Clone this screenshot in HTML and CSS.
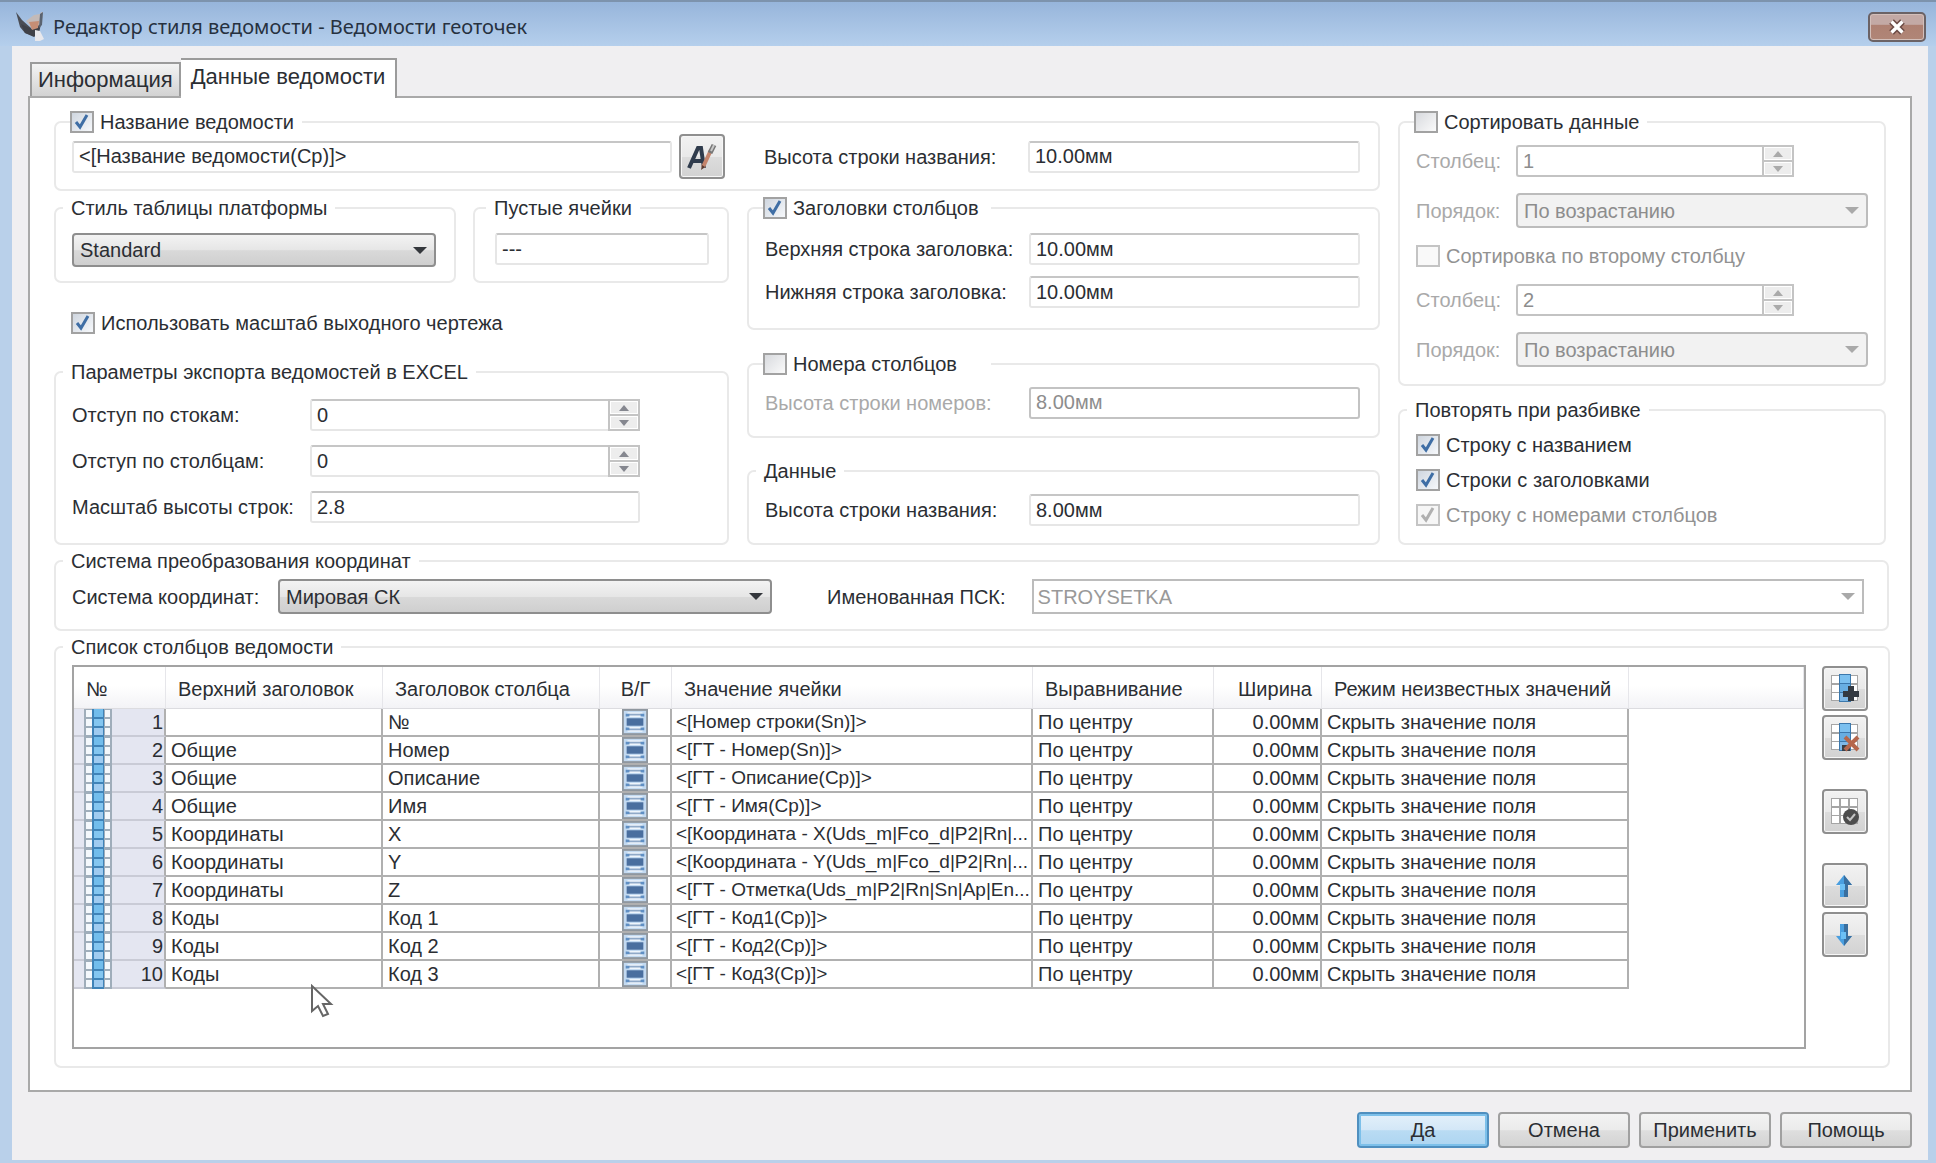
FILE: index.html
```html
<!DOCTYPE html>
<html lang="ru">
<head>
    <meta charset="UTF-8">
    <meta name="viewport" content="width=device-width, initial-scale=1.0">
    <title>Редактор стиля ведомости - Ведомости геоточек</title>
    <link rel="stylesheet" href="styles.css">
</head>
<body>

<svg class="sprite" aria-hidden="true">
    <symbol id="icon-column" viewBox="0 0 28 28">
        <rect width="28" height="28" fill="#9fadba"/>
        <g fill="#f4f8fc">
            <rect x="2" y="1" width="6" height="7"/><rect x="2" y="10" width="6" height="7"/><rect x="2" y="19" width="6" height="7"/>
            <rect x="21" y="1" width="5" height="7"/><rect x="21" y="10" width="5" height="7"/><rect x="21" y="19" width="5" height="7"/>
        </g>
        <rect x="8" width="12" height="28" fill="#3f83b8"/>
        <rect x="10" y="0" width="9" height="8" fill="#72bdec"/>
        <rect x="10" y="10" width="9" height="7" fill="#84c6f0"/>
        <rect x="10" y="19" width="9" height="7" fill="#9fcbf0"/>
    </symbol>
    <symbol id="icon-merge" viewBox="0 0 28 28">
        <rect x="1" y="1" width="26" height="26" fill="#c3daf1" stroke="#8f979f" stroke-width="2"/>
        <path d="M6 6h16M6 22h16" stroke="#eef5fc" stroke-width="5"/>
        <path d="M7 6h14M7 22h14" stroke="#8fa9c8" stroke-width="2"/>
        <path d="M4 5h4v3H4zM20 5h4v3h-4zM4 20h4v3H4zM20 20h4v3h-4z" fill="#5f8fc4"/>
        <rect x="5" y="10" width="18" height="8" fill="#4a6f9f"/>
    </symbol>
    <symbol id="icon-grid" viewBox="0 0 30 30">
        <rect x="1" y="1" width="27" height="26" fill="#a5a5a5"/>
        <g fill="#fff">
            <rect x="2" y="2" width="7" height="7"/><rect x="2" y="11" width="7" height="7"/><rect x="2" y="19" width="7" height="7"/>
            <rect x="11" y="2" width="7" height="7"/><rect x="11" y="11" width="7" height="7"/><rect x="11" y="19" width="7" height="7"/>
            <rect x="20" y="2" width="7" height="7"/><rect x="20" y="11" width="7" height="7"/><rect x="20" y="19" width="7" height="7"/>
        </g>
    </symbol>
    <symbol id="icon-grid-col" viewBox="0 0 30 30">
        <use href="#icon-grid"/>
        <rect x="9" y="0" width="12" height="28" fill="#3c78ac"/>
        <rect x="10" y="1" width="10" height="8" fill="#7cc0ef"/>
        <rect x="10" y="10" width="10" height="8" fill="#68aee2"/>
        <rect x="10" y="19" width="10" height="8" fill="#7fb8e6"/>
    </symbol>
</svg>

<header class="titlebar">
    <svg class="app-icon" viewBox="0 0 30 30">
        <path d="M0 0l6 8 9 8 3 8-9-3-5-6z" fill="#4a4d55"/>
        <path d="M10 9l8-6 6-1 2-3 1 3-3 11-9 2z" fill="#c3bab8"/>
        <path d="M5 12l11 5 9-5-2 9-5 4-9-4z" fill="#3f4148"/>
        <path d="M13 10l10-1-1 7-6 2z" fill="#c68e75"/>
        <path d="M24 2l3-2-1 13-3 3z" fill="#5a6370"/>
        <path d="M19 18l5 1 4 8-4 2h-5z" fill="#e8e8ec"/>
    </svg>
    <h1>Редактор стиля ведомости - Ведомости геоточек</h1>
    <button type="button" class="close" aria-label="Закрыть">
        <svg viewBox="0 0 20 16"><path d="M5 3l10 10M15 3L5 13" stroke="#6d4c46" stroke-width="6"/><path d="M5 3l10 10M15 3L5 13" stroke="#fff" stroke-width="3"/></svg>
    </button>
</header>

<main class="client">
    <nav class="tabs">
        <button type="button" class="tab">Информация</button>
        <button type="button" class="tab active">Данные ведомости</button>
    </nav>

    <div class="panel">
        <div class="top">
            <div class="main-col">
                <fieldset>
                    <legend class="tick"><label><input type="checkbox" checked>Название ведомости</label></legend>
                    <div class="name-row">
                        <input type="text" class="name" aria-label="Название ведомости" value="&lt;[Название ведомости(Cp)]&gt;">
                        <button type="button" class="tool" aria-label="Редактировать текст">
                            <svg viewBox="0 0 30 30">
                                <path d="M2 26L11 6h3l3 20M6 19h10" fill="none" stroke="#2f3b4c" stroke-width="4"/>
                                <path d="M16 25l8-17" stroke="#c4846c" stroke-width="4"/>
                                <path d="M23 11l4-8" stroke="#777" stroke-width="5"/>
                                <path d="M24 9l3-6" stroke="#c8c8c8" stroke-width="2"/>
                                <path d="M14 28l1-5 3 2z" fill="#5c3b30"/>
                            </svg>
                        </button>
                        <label class="mid-label" for="title-height">Высота строки названия:</label>
                        <input type="text" id="title-height" class="mid-input" value="10.00мм">
                    </div>
                </fieldset>

                <div class="halves">
                    <div class="left-half">
                        <div class="pair">
                            <fieldset class="box">
                                <legend>Стиль таблицы платформы</legend>
                                <div class="select"><select aria-label="Стиль таблицы платформы"><option>Standard</option></select></div>
                            </fieldset>
                            <fieldset class="box empty-cells">
                                <legend>Пустые ячейки</legend>
                                <input type="text" aria-label="Пустые ячейки" value="---">
                            </fieldset>
                        </div>
                        <label class="use-scale"><input type="checkbox" checked>Использовать масштаб выходного чертежа</label>
                        <fieldset class="excel">
                            <legend>Параметры экспорта ведомостей в EXCEL</legend>
                            <div class="field">
                                <label for="row-offset">Отступ по стокам:</label>
                                <div class="spin"><input type="number" id="row-offset" value="0"><span><button type="button" aria-label="Больше"></button><button type="button" aria-label="Меньше"></button></span></div>
                            </div>
                            <div class="field">
                                <label for="col-offset">Отступ по столбцам:</label>
                                <div class="spin"><input type="number" id="col-offset" value="0"><span><button type="button" aria-label="Больше"></button><button type="button" aria-label="Меньше"></button></span></div>
                            </div>
                            <div class="field">
                                <label for="row-scale">Масштаб высоты строк:</label>
                                <input type="text" id="row-scale" value="2.8">
                            </div>
                        </fieldset>
                    </div>

                    <div class="right-half">
                        <fieldset class="heads">
                            <legend class="tick wide"><label><input type="checkbox" checked>Заголовки столбцов</label></legend>
                            <div class="field">
                                <label for="head-top">Верхняя строка заголовка:</label>
                                <input type="text" id="head-top" value="10.00мм">
                            </div>
                            <div class="field">
                                <label for="head-bottom">Нижняя строка заголовка:</label>
                                <input type="text" id="head-bottom" value="10.00мм">
                            </div>
                        </fieldset>
                        <fieldset>
                            <legend class="tick wide"><label><input type="checkbox">Номера столбцов</label></legend>
                            <div class="field off">
                                <label for="num-height">Высота строки номеров:</label>
                                <input type="text" id="num-height" value="8.00мм" disabled>
                            </div>
                        </fieldset>
                        <fieldset>
                            <legend>Данные</legend>
                            <div class="field">
                                <label for="data-height">Высота строки названия:</label>
                                <input type="text" id="data-height" value="8.00мм">
                            </div>
                        </fieldset>
                    </div>
                </div>
            </div>

            <div class="side-col">
                <fieldset class="sort">
                    <legend class="tick"><label><input type="checkbox">Сортировать данные</label></legend>
                    <div class="field off">
                        <label for="sort-col">Столбец:</label>
                        <div class="spin"><input type="number" id="sort-col" value="1" disabled><span><button type="button" disabled aria-label="Больше"></button><button type="button" disabled aria-label="Меньше"></button></span></div>
                    </div>
                    <div class="field off">
                        <label for="sort-order">Порядок:</label>
                        <div class="select"><select id="sort-order" disabled><option>По возрастанию</option></select></div>
                    </div>
                    <label class="off"><input type="checkbox" disabled>Сортировка по второму столбцу</label>
                    <div class="field off">
                        <label for="sort-col-2">Столбец:</label>
                        <div class="spin"><input type="number" id="sort-col-2" value="2" disabled><span><button type="button" disabled aria-label="Больше"></button><button type="button" disabled aria-label="Меньше"></button></span></div>
                    </div>
                    <div class="field off">
                        <label for="sort-order-2">Порядок:</label>
                        <div class="select"><select id="sort-order-2" disabled><option>По возрастанию</option></select></div>
                    </div>
                </fieldset>
                <fieldset class="repeat">
                    <legend>Повторять при разбивке</legend>
                    <label><input type="checkbox" checked>Строку с названием</label>
                    <label><input type="checkbox" checked>Строки с заголовками</label>
                    <label class="off"><input type="checkbox" checked disabled>Строку с номерами столбцов</label>
                </fieldset>
            </div>
        </div>

        <fieldset class="coords">
            <legend>Система преобразования координат</legend>
            <div class="coords-row">
                <label for="coord-system">Система координат:</label>
                <div class="select world"><select id="coord-system"><option>Мировая СК</option></select></div>
                <label for="named-ucs">Именованная ПСК:</label>
                <div class="select plain"><select id="named-ucs" disabled><option>STROYSETKA</option></select></div>
            </div>
        </fieldset>

        <fieldset class="columns">
            <legend>Список столбцов ведомости</legend>
            <div class="columns-row">
                <div class="list">
                    <table>
                        <colgroup>
                            <col class="c-num"><col class="c-top"><col class="c-head"><col class="c-vg"><col class="c-value">
                            <col class="c-align"><col class="c-width"><col class="c-mode"><col>
                        </colgroup>
                        <thead>
                            <tr>
                                <th>№</th><th>Верхний заголовок</th><th>Заголовок столбца</th><th class="center">В/Г</th><th>Значение ячейки</th>
                                <th>Выравнивание</th><th class="right">Ширина</th><th>Режим неизвестных значений</th><th></th>
                            </tr>
                        </thead>
                        <tbody id="rows"></tbody>
                    </table>
                    <svg class="cursor" viewBox="0 0 24 34"><path d="M2 2v25l6-5 5 10 5-2-5-10h8z" fill="#fff" stroke="#666" stroke-width="2"/></svg>
                </div>
                <div class="tools">
                    <button type="button" class="tool" aria-label="Добавить столбец">
                        <svg viewBox="0 0 30 30"><use href="#icon-grid-col"/><path d="M21 12v15M13 20h16" stroke="#343a42" stroke-width="6"/></svg>
                    </button>
                    <button type="button" class="tool" aria-label="Удалить столбец">
                        <svg viewBox="0 0 30 30"><use href="#icon-grid-col"/><path d="M12 22h8v6h-8z" fill="#3a3f46"/><path d="M15 14l13 13M28 14L15 27" stroke="#b5674c" stroke-width="4"/></svg>
                    </button>
                    <button type="button" class="tool apart" aria-label="Проверить">
                        <svg viewBox="0 0 30 30"><use href="#icon-grid"/><circle cx="21" cy="20" r="8" fill="#4d4d4d"/><path d="M17 20l3 3 5-6" fill="none" stroke="#c4c4c4" stroke-width="2"/></svg>
                    </button>
                    <button type="button" class="tool apart" aria-label="Вверх">
                        <svg viewBox="0 0 30 30"><path d="M14 4l8 10h-4v12h-8V14H6z" fill="#4a9fe0"/><path d="M14 4l8 10h-4v12h-4z" fill="#3a6f9f"/><path d="M10 13h5v6h-5z" fill="#6cc0f5"/></svg>
                    </button>
                    <button type="button" class="tool" aria-label="Вниз">
                        <svg viewBox="0 0 30 30"><path d="M14 26l8-10h-4V4h-8v12H6z" fill="#4a9fe0"/><path d="M14 16V4h4v12h4l-8 10z" fill="#3a6f9f"/><path d="M11 12h5v7h-5z" fill="#6cc0f5"/></svg>
                    </button>
                </div>
            </div>
        </fieldset>
    </div>

    <footer class="actions">
        <button type="button" class="primary">Да</button>
        <button type="button">Отмена</button>
        <button type="button">Применить</button>
        <button type="button">Помощь</button>
    </footer>
</main>

<script>
    const rows = [
        ['', '№', '<[Номер строки(Sn)]>'],
        ['Общие', 'Номер', '<[ГТ - Номер(Sn)]>'],
        ['Общие', 'Описание', '<[ГТ - Описание(Cp)]>'],
        ['Общие', 'Имя', '<[ГТ - Имя(Cp)]>'],
        ['Координаты', 'X', '<[Координата - X(Uds_m|Fco_d|P2|Rn|...'],
        ['Координаты', 'Y', '<[Координата - Y(Uds_m|Fco_d|P2|Rn|...'],
        ['Координаты', 'Z', '<[ГТ - Отметка(Uds_m|P2|Rn|Sn|Ap|En...'],
        ['Коды', 'Код 1', '<[ГТ - Код1(Cp)]>'],
        ['Коды', 'Код 2', '<[ГТ - Код2(Cp)]>'],
        ['Коды', 'Код 3', '<[ГТ - Код3(Cp)]>']
    ];

    document.getElementById('rows').innerHTML = rows.map((row, i) => `
        <tr>
            <td class="num"><div><svg><use href="#icon-column"/></svg>${i + 1}</div></td>
            <td>${row[0]}</td>
            <td>${row[1]}</td>
            <td class="vg"><svg><use href="#icon-merge"/></svg></td>
            <td class="value">${row[2].replace('<', '&lt;')}</td>
            <td>По центру</td>
            <td class="right">0.00мм</td>
            <td>Скрыть значение поля</td>
            <td class="rest"></td>
        </tr>`).join('');
</script>

</body>
</html>
```

FILE: styles.css
```css
* {
    box-sizing: border-box;
}
body {
    margin: 0;
    min-height: 100vh;
    display: flex;
    flex-direction: column;
    font: 20px/24px "Liberation Sans", Arial, sans-serif;
    color: #2b2e33;
    background: #b9d0ea;
}
.sprite {
    display: none;
}
button, input, select {
    font: inherit;
    color: inherit;
}

/* title bar */
.titlebar {
    display: flex;
    align-items: center;
    gap: 7px;
    height: 46px;
    padding: 6px 10px 0 16px;
    border-top: 2px solid #7d93ad;
    background: linear-gradient(#97b5db, #b5cfec);
}
.titlebar h1 {
    flex: 1;
    margin: 0;
    font: 20px/24px "Noto Sans", "Open Sans", sans-serif;
    color: #26313f;
}
.app-icon {
    width: 30px;
    height: 30px;
}
.close {
    display: flex;
    align-items: center;
    justify-content: center;
    width: 58px;
    height: 30px;
    padding: 0;
    border: 2px solid #6b6265;
    border-radius: 5px;
    background: linear-gradient(#c3a9a5 40%, #ae8072 42%, #b08677);
    box-shadow: inset 0 0 0 1px #d3bfba;
}
.close svg {
    width: 22px;
    height: 18px;
}

.client {
    flex: 1;
    display: flex;
    flex-direction: column;
    margin: 0 8px 4px 12px;
    padding: 12px 16px 12px;
    background: #f0eff1;
}

/* tabs */
.tabs {
    display: flex;
    align-items: flex-end;
    padding-left: 2px;
}
.tab {
    height: 34px;
    padding: 0 6px;
    border: 2px solid #9b9b9b;
    border-bottom: 0;
    background: linear-gradient(#f3f3f3, #d3d3d3);
    font-size: 22px;
}
.tab.active {
    height: 40px;
    margin-bottom: -2px;
    padding: 0 10px 4px;
    border-left: 0;
    background: #fff;
    z-index: 1;
}
.panel {
    flex: 1;
    display: flex;
    flex-direction: column;
    padding: 12px 20px 22px 24px;
    border: 2px solid #a9a9a9;
    background: #fff;
}

/* group boxes */
fieldset {
    min-width: 0;
    margin: 0;
    padding: 0 16px 16px;
    border: 2px solid #e9e9e9;
    border-radius: 7px;
}
legend {
    height: 24px;
    margin-left: -9px;
    padding: 0 8px;
}
.tick {
    margin-left: -2px;
    padding: 0 8px 0 0;
}
.wide {
    width: 228px;
}

/* controls */
label {
    white-space: nowrap;
}
label:has(input) {
    display: flex;
    align-items: center;
    gap: 6px;
}
input[type="checkbox"] {
    appearance: none;
    width: 24px;
    height: 22px;
    margin: 0;
    border: 2px solid #a2a2a2;
    background: linear-gradient(135deg, #d8dade, #fafafa);
}
input[type="checkbox"]:checked {
    background: url("data:image/svg+xml,%3Csvg xmlns='http://www.w3.org/2000/svg' viewBox='0 0 20 18'%3E%3Cpath d='M4 9l4 5 7-12' fill='none' stroke='%233f6ea5' stroke-width='3'/%3E%3C/svg%3E") center / 20px 18px, linear-gradient(135deg, #cfd6df, #f6f8fb);
}
input[type="checkbox"]:disabled {
    border-color: #c4c4c4;
    background: #f9f9f9;
}
input[type="checkbox"]:disabled:checked {
    background: url("data:image/svg+xml,%3Csvg xmlns='http://www.w3.org/2000/svg' viewBox='0 0 20 18'%3E%3Cpath d='M4 9l4 5 7-12' fill='none' stroke='%23b0b0b0' stroke-width='3'/%3E%3C/svg%3E") center / 20px 18px #f6f6f6;
}
input[type="text"], input[type="number"] {
    width: 100%;
    min-width: 0;
    height: 32px;
    padding: 0 5px;
    border: 2px solid #e6e6e6;
    border-top-color: #c6c6c6;
    border-radius: 3px;
    background: #fff;
}
input[type="number"] {
    appearance: textfield;
}
input:disabled, select:disabled {
    color: #8d8d8d;
    opacity: 1;
}
input[type="text"]:disabled, input[type="number"]:disabled {
    border-color: #c3c3c3;
}
.off {
    color: #a9a9a9;
}
label.off {
    color: #929292;
}
.spin {
    display: flex;
}
.spin input {
    border-right: 0;
    border-radius: 3px 0 0 3px;
}
.spin span {
    display: flex;
    flex-direction: column;
    flex: none;
    width: 32px;
    border: 2px solid #c4c4c4;
    background: #c4c4c4;
    gap: 2px;
}
.spin button {
    flex: 1;
    display: flex;
    align-items: center;
    justify-content: center;
    padding: 0;
    border: 1px solid #fff;
    background: #ededed;
}
.spin button::before {
    content: "";
    border: 5px solid transparent;
    border-top: 0;
    border-bottom: 6px solid #85878f;
}
.spin button:last-child::before {
    border-top: 6px solid #85878f;
    border-bottom: 0;
}
.spin button:disabled::before {
    border-top-color: #aaa;
    border-bottom-color: #aaa;
}
.spin button:first-child:disabled::before {
    border-top: 0;
}
.select {
    position: relative;
}
.select::after {
    content: "";
    position: absolute;
    top: 14px;
    right: 9px;
    border: 7px solid transparent;
    border-top-color: #34373c;
    border-bottom: 0;
    pointer-events: none;
}
.select:has(:disabled)::after {
    border-top-color: #a9a9a9;
}
select {
    appearance: none;
    display: block;
    width: 100%;
    height: 35px;
    padding: 0 6px;
    border: 2px solid #8e8e8e;
    border-radius: 4px;
    background: linear-gradient(#f3f3f3, #e6e6e6 50%, #d9d9d9 52%, #cfcfcf);
}
select:disabled {
    border-color: #bcbcbc;
    background: #f2f2f2;
}
.plain select {
    padding: 0 4px;
    border-radius: 0;
    background: #fff;
    color: #999;
}
.tool {
    display: flex;
    align-items: center;
    justify-content: center;
    flex: none;
    width: 46px;
    height: 45px;
    padding: 0;
    border: 2px solid #8f8f8f;
    border-radius: 4px;
    background: linear-gradient(#f2f2f2, #e9e9e9 50%, #dcdcdc 52%, #d2d2d2);
    box-shadow: inset 0 0 0 1px #f6f6f6;
}
.tool svg {
    width: 30px;
    height: 30px;
}

/* upper part */
.top {
    display: grid;
    grid-template-columns: minmax(0, 1fr) 488px;
    gap: 18px;
    padding-right: 4px;
}
.main-col, .side-col, .left-half, .right-half {
    display: flex;
    flex-direction: column;
    min-width: 0;
}
.main-col {
    gap: 5px;
}
.main-col > fieldset {
    padding-right: 18px;
    padding-bottom: 10px;
}
.name-row {
    display: flex;
    align-items: center;
}
.name-row .name {
    flex: 1;
    margin-right: 7px;
}
.mid-label {
    width: 264px;
    margin-left: 39px;
}
.name-row .mid-input {
    width: 332px;
}
.halves {
    flex: 1;
    display: grid;
    grid-template-columns: minmax(0, 1fr) 633px;
    gap: 18px;
}
.pair {
    display: grid;
    grid-template-columns: minmax(0, 1fr) 256px;
    gap: 17px;
}
.box {
    padding: 13px 18px 14px 16px;
}
.box select {
    height: 34px;
}
.empty-cells {
    padding-left: 20px;
}
.use-scale {
    margin: 28px 0 25px 17px;
}
.field {
    display: grid;
    grid-template-columns: 238px minmax(0, 1fr);
    align-items: center;
}
.excel {
    flex: 1;
    display: grid;
    align-content: start;
    gap: 14px;
    padding: 15px 87px 0 16px;
}
.right-half {
    justify-content: space-between;
}
.right-half .field {
    grid-template-columns: 264px minmax(0, 1fr);
}
.right-half fieldset {
    padding: 11px 18px 17px 16px;
}
.right-half .heads {
    display: grid;
    gap: 11px;
    padding: 13px 18px 20px 16px;
}
.side-col {
    gap: 12px;
}
.sort {
    display: grid;
    gap: 16px;
    padding: 11px 16px 17px;
}
.sort .field {
    grid-template-columns: 100px minmax(0, 1fr);
}
.sort .spin {
    margin-right: 74px;
}
.repeat {
    display: grid;
    gap: 11px;
    padding-top: 11px;
}

/* coordinate system */
.coords {
    margin: 4px 1px 4px 0;
    padding: 6px 23px 15px 16px;
}
.coords-row {
    display: flex;
    align-items: center;
}
.coords-row label:first-child {
    width: 206px;
}
.world {
    width: 494px;
    margin-right: 55px;
}
.plain {
    flex: 1;
    margin-left: 26px;
}

/* list of columns */
.columns {
    flex: 1;
    padding: 6px 20px 17px 16px;
}
.columns-row {
    display: flex;
    gap: 16px;
}
.list {
    position: relative;
    flex: 1;
    min-width: 0;
    min-height: 384px;
    border: 2px solid #a3a3a3;
}
table {
    width: 100%;
    table-layout: fixed;
    border-collapse: separate;
    border-spacing: 0;
}
.c-num {
    width: 92px;
}
.c-top, .c-head {
    width: 217px;
}
.c-vg {
    width: 72px;
}
.c-value {
    width: 361px;
}
.c-align {
    width: 181px;
}
.c-width {
    width: 108px;
}
.c-mode {
    width: 307px;
}
th {
    height: 42px;
    padding: 2px 0 0 12px;
    border-right: 1px solid #e6e6ea;
    border-bottom: 1px solid #dcdce0;
    background: linear-gradient(#fff 45%, #f3f3f6);
    font-weight: normal;
    text-align: left;
    white-space: nowrap;
}
td {
    height: 28px;
    padding: 0 0 0 5px;
    border-right: 2px solid #b0b0b0;
    border-bottom: 2px solid #b0b0b0;
    line-height: 26px;
    white-space: nowrap;
}
th.center {
    padding-left: 0;
    text-align: center;
}
.right {
    padding-right: 1px;
    text-align: right;
}
th.right {
    padding-right: 9px;
}
.value {
    padding-left: 4px;
    font-size: 19px;
}
.num {
    padding: 0 1px 0 10px;
    border-bottom-color: #c9cbd6;
    background: #e4e6f1;
}
.num div {
    display: flex;
    justify-content: space-between;
    height: 26px;
}
td svg {
    display: block;
    width: 28px;
    height: 28px;
}
.vg {
    padding: 0 0 0 21px;
}
.vg svg {
    height: 26px;
}
td.rest {
    border: 0;
}
.cursor {
    position: absolute;
    left: 236px;
    top: 317px;
    width: 24px;
    height: 34px;
}
.tools {
    display: flex;
    flex-direction: column;
    gap: 4px;
    padding-top: 1px;
}
.apart {
    margin-top: 25px;
}

/* bottom buttons */
.actions {
    display: flex;
    justify-content: flex-end;
    gap: 9px;
    padding-top: 20px;
}
.actions button {
    width: 132px;
    height: 36px;
    padding: 0;
    border: 2px solid #a0a0a0;
    border-radius: 4px;
    background: linear-gradient(#f3f3f3, #ebebeb 50%, #dedede 52%, #d3d3d3);
}
.actions .primary {
    border-color: #4f8fbf;
    background: linear-gradient(#e3f0fa, #d3e7f7 50%, #b9dbf3 52%, #add5f1);
    box-shadow: inset 0 0 0 2px #7cc0ea;
}
```
